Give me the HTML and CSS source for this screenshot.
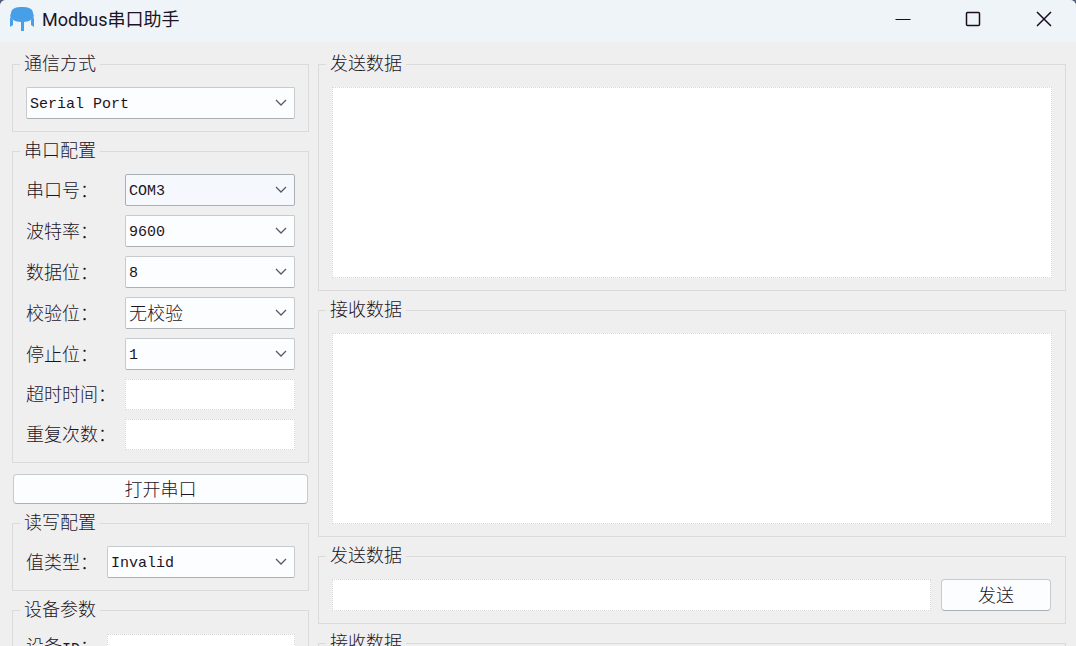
FILE: index.html
```
<!DOCTYPE html>
<html lang="zh-CN">
<head>
<meta charset="UTF-8" />
<meta name="viewport" content="width=device-width, initial-scale=1" />
<title>Modbus串口助手</title>
<link rel="stylesheet" href="styles.css">
</head>
<body>

<div class="window">
  <header class="titlebar">
    <svg class="logo" width="24" height="24" viewBox="0 0 24 24" fill="#479fe8">
      <path d="M5 1C8 -.3 16 -.3 19 1c3 1 4 3 4 5.500 1 1 1 3 0 5-2 2-5 3-8 3.200l-1 .3v9h-3v-9l-2-.3C6 14.500 3 13.500 1 11.500 0 9.500 0 7.500 1 6.500 1 4 2 2 5 1z"/>
      <path d="M0 10.500l3 2.500v5l-3 2zM24 10.500L21 13v5l3 2z"/>
    </svg>
    <h1>Modbus串口助手</h1>
    <div class="window-buttons">
      <button aria-label="最小化"><svg width="16" height="16" viewBox="0 0 16 16"><path d="M.5 8.500h15"/></svg></button>
      <button aria-label="最大化"><svg width="16" height="16" viewBox="0 0 16 16"><rect x="1.500" y="1.500" width="13" height="13" rx="1"/></svg></button>
      <button aria-label="关闭"><svg width="16" height="16" viewBox="0 0 16 16"><path d="M1 1l14 14M15 1L1 15"/></svg></button>
    </div>
  </header>

  <main class="content">
    <div class="column">
      <fieldset>
        <legend>通信方式</legend>
        <select class="latin" aria-label="通信方式">
          <option>Serial Port</option>
        </select>
      </fieldset>

      <fieldset>
        <legend>串口配置</legend>
        <div class="form">
          <label for="port">串口号：</label>
          <select id="port" class="latin active"><option>COM3</option></select>
          <label for="baud">波特率：</label>
          <select id="baud" class="latin"><option>9600</option></select>
          <label for="databits">数据位：</label>
          <select id="databits" class="latin"><option>8</option></select>
          <label for="parity">校验位：</label>
          <select id="parity"><option>无校验</option></select>
          <label for="stopbits">停止位：</label>
          <select id="stopbits" class="latin"><option>1</option></select>
          <label for="timeout">超时时间：</label>
          <input type="text" id="timeout" />
          <label for="retries">重复次数：</label>
          <input type="text" id="retries" />
        </div>
      </fieldset>

      <button class="button open">打开串口</button>

      <fieldset>
        <legend>读写配置</legend>
        <div class="form">
          <label for="valuetype">值类型：</label>
          <select id="valuetype" class="latin"><option>Invalid</option></select>
        </div>
      </fieldset>

      <fieldset>
        <legend>设备参数</legend>
        <div class="form">
          <label for="device">设备<span class="latin">ID</span>：</label>
          <input type="text" id="device" />
        </div>
      </fieldset>
    </div>

    <div class="column">
      <fieldset>
        <legend>发送数据</legend>
        <textarea aria-label="发送数据"></textarea>
      </fieldset>

      <fieldset>
        <legend>接收数据</legend>
        <textarea aria-label="接收数据" readonly></textarea>
      </fieldset>

      <fieldset>
        <legend>发送数据</legend>
        <div class="send-row">
          <input type="text" aria-label="发送数据" />
          <button class="button">发送</button>
        </div>
      </fieldset>

      <fieldset>
        <legend>接收数据</legend>
        <textarea aria-label="接收数据" readonly></textarea>
      </fieldset>
    </div>
  </main>
</div>

</body>
</html>
```
FILE: styles.css
```
* {
  box-sizing: border-box;
}
body {
  margin: 0;
  height: 100vh;
  overflow: hidden;
  background: #56607a;
  color: #1c1424;
  font-family: "Noto Sans CJK SC", sans-serif;
  font-size: 18px;
  font-weight: 300;
}
.window {
  height: 100%;
  overflow: hidden;
  background: #efefef;
  border-radius: 6px 6px 0 0;
}
.titlebar {
  display: flex;
  align-items: center;
  height: 42px;
  padding: 0 0 4px 10px;
  background: #eff4f9;
}
.titlebar h1 {
  flex: 1;
  margin: 0 0 0 8px;
  padding-top: 2px;
  font-family: Roboto, "Noto Sans CJK SC", sans-serif;
  font-size: 18px;
  font-weight: 400;
  line-height: 24px;
}
.window-buttons {
  display: flex;
}
.window-buttons button {
  display: flex;
  align-items: center;
  justify-content: center;
  width: 70px;
  height: 38px;
  padding: 0;
  border: none;
  background: none;
}
.window-buttons button:last-child {
  width: 64px;
  margin-left: 4px;
}
.window-buttons svg {
  fill: none;
  stroke: #1c0c20;
  stroke-width: 1.5;
}
.window-buttons button:first-child svg {
  stroke-width: 1;
}

/* two columns of group boxes */
.content {
  display: grid;
  grid-template-columns: 297px 1fr;
  gap: 9px;
  padding: 13px 10px 0 12px;
}
.column {
  display: flex;
  flex-direction: column;
  gap: 10px;
}
fieldset {
  min-width: 0;
  margin: 0;
  padding: 13px 13px 12px;
  border: 1px solid #dadada;
}
legend {
  margin-left: -6px;
  padding: 0 4px 4px;
  line-height: 15px;
}
.form {
  display: grid;
  grid-template-columns: auto 1fr;
  align-items: center;
  gap: 9px;
}
label {
  padding-bottom: 3px;
  line-height: 24px;
  white-space: nowrap;
}

select,
input,
textarea,
.button {
  display: block;
  width: 100%;
  margin: 0;
  color: inherit;
  font: inherit;
}
select {
  height: 32px;
  padding: 0 24px 2px 3px;
  border: 1px solid #c6cbce;
  border-bottom-color: #aab0b4;
  border-radius: 2px;
  appearance: none;
  background: #fcfdfe url("data:image/svg+xml,%3Csvg xmlns='http://www.w3.org/2000/svg' width='12' height='8'%3E%3Cpath d='M1 1l5 5 5-5' fill='none' stroke='%23555a68' stroke-width='1.3'/%3E%3C/svg%3E") no-repeat right 7px center;
}
select.active {
  border-color: #aab0b4;
  background-color: #f5f9fd;
}
.latin {
  font-family: "Liberation Mono", monospace;
  font-size: 15px;
}
select.latin {
  padding-top: 2px;
  padding-bottom: 0;
}
input,
textarea {
  border: 1px dotted #d8d8d8;
  background: #fff;
}
input {
  height: 31px;
}
textarea {
  height: 191px;
  resize: none;
}
.button {
  height: 32px;
  padding: 0 0 2px;
  border: 1px solid #c6cbce;
  border-bottom-color: #aab0b4;
  border-radius: 4px;
  background: #fcfdfe;
  line-height: 24px;
}
.open {
  width: auto;
  height: 30px;
  margin: 1px 1px 0;
}
.send-row {
  display: grid;
  grid-template-columns: 1fr 110px;
  gap: 10px;
  padding-right: 1px;
}
.send-row input {
  height: 32px;
}
```
